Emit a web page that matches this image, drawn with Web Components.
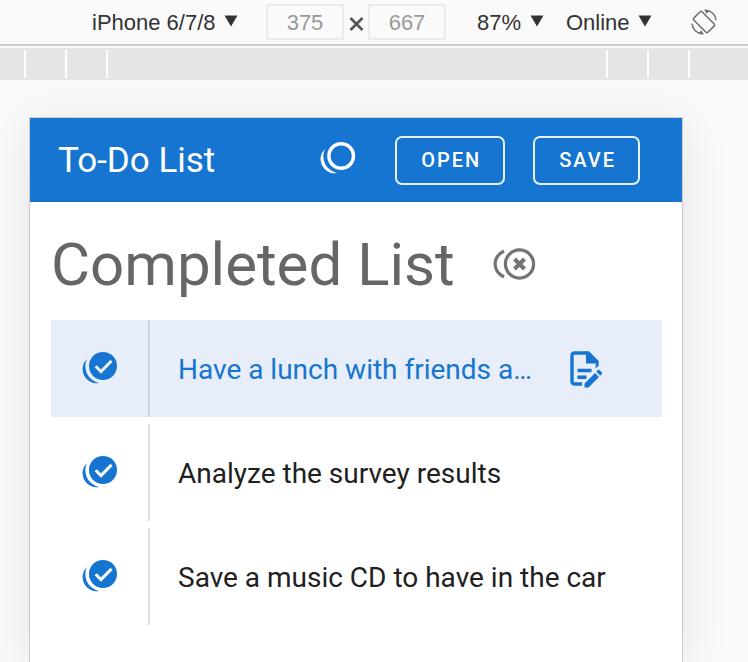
<!DOCTYPE html>
<html lang="en">
<head>
<meta charset="utf-8">
<title>To-Do List</title>
<style>
html { height: 100%; }
body { margin: 0; height: 100%; overflow: hidden; background: #fafafa; }
</style>
</head>
<body>
<todo-preview></todo-preview>

<script>
const define = (name, html, fill) => customElements.define(name, class extends HTMLElement {
  connectedCallback() {
    if (this.shadowRoot) return;
    const template = document.createElement('template');
    template.innerHTML = html;
    this.attachShadow({ mode: 'open' }).append(template.content.cloneNode(true));
    if (fill) fill(this, this.shadowRoot);
  }
});

define('tool-select', `
<style>
:host { display: flex; align-items: center; gap: 8px; }
select { appearance: none; border: 0; margin: 0; padding: 1px 0 0; background: none; color: #333; font: 22px/28px "Liberation Sans", sans-serif; }
svg { display: block; width: 14px; height: 12px; fill: #333; pointer-events: none; margin-bottom: 3px; }
</style>
<select><option></option></select>
<svg viewBox="0 0 14 12"><path d="M.5.5h13L7 11.5z"/></svg>`,
(host, root) => {
  root.querySelector('option').textContent = host.getAttribute('value');
  root.querySelector('select').setAttribute('aria-label', host.getAttribute('label'));
});

define('size-field', `
<style>
:host { display: block; }
input { display: block; box-sizing: border-box; width: 78px; height: 36px; border: 2px solid #ebebeb; padding: 1px 0 0; margin: 0; background: #fafafa; color: #999; text-align: center; font: 22px/28px "Liberation Sans", sans-serif; }
</style>
<input type="text">`,
(host, root) => {
  const input = root.querySelector('input');
  input.value = host.getAttribute('value');
  input.setAttribute('aria-label', host.getAttribute('label'));
});

define('device-toolbar', `
<style>
:host { display: flex; align-items: center; box-sizing: border-box; height: 46px; padding-left: 92px; border-bottom: 2px solid #ccc; background: #fafafa; }
.size { display: flex; align-items: center; gap: 4px; margin: 0 31px 0 28px; }
.times { display: block; width: 16px; height: 14px; margin-top: 4px; stroke: #555; stroke-width: 2.6; fill: none; }
.network { margin-left: 22px; }
button { border: 0; padding: 0; margin-left: 38px; background: none; }
button svg { display: block; width: 28px; height: 28px; }
</style>
<tool-select label="Device" value="iPhone 6/7/8"></tool-select>
<div class="size">
  <size-field label="Width" value="375"></size-field>
  <svg class="times" viewBox="0 0 16 14"><path d="M2.5 1l12 12m0-12l-12 12"/></svg>
  <size-field label="Height" value="667"></size-field>
</div>
<tool-select label="Zoom" value="87%"></tool-select>
<tool-select class="network" label="Network" value="Online"></tool-select>
<button aria-label="Rotate"><svg viewBox="0 0 28 28" fill="none" stroke="#6e6e6e" stroke-width="1.5">
  <rect x="8.2" y="4" width="11.6" height="20" rx="1.3" transform="rotate(-45 14 14)"/>
  <path d="M15.5 2.3c5.8.3 10.1 4.4 10.4 10M12.5 25.7C6.700 25.400 2.400 21.300 2.100 15.700"/>
  <path d="M14 1.500l5.500.700-2.700 3.600zM14 26.500l-5.500-.700 2.700-3.600z" fill="#6e6e6e" stroke="none"/>
</svg></button>`);

define('media-ruler', `
<style>
:host { display: flex; justify-content: space-between; box-sizing: border-box; height: 32px; margin-top: 2px; padding: 2px 58px 2px 24px; background: #e5e5e5; }
div { display: flex; gap: 39px; }
i { width: 2px; background: #fff; }
</style>
<div><i></i><i></i><i></i></div><div><i></i><i></i><i></i></div>`);

define('outline-button', `
<style>
:host { display: block; }
button { display: block; box-sizing: border-box; height: 49px; padding: 0 22px 0 24px; border: 2px solid #e8f1fb; border-radius: 7px; background: none; color: #fff; font: 500 20px/28px Roboto, sans-serif; letter-spacing: 2px; text-transform: uppercase; }
</style>
<button><slot></slot></button>`);

define('app-header', `
<style>
:host { display: flex; align-items: center; box-sizing: border-box; height: 84px; padding: 0 42px 0 28px; background: #1575d0; color: #fff; }
h1 { flex: 1; margin: 0; padding-top: 2px; font: 400 35px/44px Roboto, sans-serif; white-space: nowrap; }
.filter { border: 0; padding: 0; margin: 0 39px 4px 0; background: none; }
svg { display: block; width: 36px; height: 32px; }
outline-button + outline-button { margin-left: 28px; }
</style>
<h1>To-Do List</h1>
<button class="filter" aria-label="Show completed"><svg viewBox="0 0 36 32" fill="none">
  <circle cx="21.200" cy="14" r="12.300" stroke="#fff" stroke-width="3.400"/>
  <path d="M5 7A14 14 0 0 0 17 31A17 17 0 0 1 5 7z" fill="#fff"/>
</svg></button>
<outline-button>Open</outline-button>
<outline-button>Save</outline-button>`);

define('list-heading', `
<style>
:host { display: flex; align-items: center; gap: 37px; height: 118px; }
h2 { margin: 0; padding-top: 8px; color: #666; font: 400 60px/68px Roboto, sans-serif; white-space: nowrap; }
button { border: 0; padding: 0; margin-top: 6px; background: none; }
svg { display: block; width: 44px; height: 34px; }
</style>
<h2><slot></slot></h2>
<button aria-label="Clear completed"><svg viewBox="0 0 44 34" fill="none" stroke="#737373">
  <circle cx="27.500" cy="17" r="14.100" stroke-width="3.200"/>
  <path d="M12 4C.2 10 .2 24 12 30" stroke-width="3.200"/>
  <path d="M22.500 12l10 10m0-10l-10 10" stroke-width="4"/>
</svg></button>`);

define('todo-item', `
<style>
:host { display: flex; align-items: stretch; height: 97px; color: #212121; }
:host([selected]) { background: #e7eefa; color: #1575d0; }
.mark { display: flex; align-items: center; justify-content: center; flex: none; box-sizing: border-box; width: 99px; padding-bottom: 2px; border-right: 2px solid #dedede; }
:host([selected]) .mark { border-color: #ccd4e0; }
button { border: 0; padding: 0; background: none; color: #1575d0; }
svg { display: block; }
.check { width: 36px; height: 32px; --tick: #fff; }
:host([selected]) .check { --tick: #e7eefa; }
p { flex: 0 1 auto; align-self: center; margin: 2px 0 0 28px; font: 400 28px/36px Roboto, sans-serif; white-space: nowrap; }
.edit { display: none; align-self: center; margin-left: auto; margin-right: 59px; }
:host([selected]) .edit { display: block; }
.edit svg { width: 34px; height: 38px; }
</style>
<div class="mark"><button aria-label="Mark as not done"><svg class="check" viewBox="0 0 36 32">
  <circle cx="21" cy="14" r="14" fill="currentColor"/>
  <path d="M5 7A14 14 0 0 0 17 31A17 17 0 0 1 5 7z" fill="currentColor"/>
  <path d="M13.700 14.300l5.300 5.300L29.500 8.900" fill="none" stroke="var(--tick)" stroke-width="3"/>
</svg></button></div>
<p><slot></slot></p>
<button class="edit" aria-label="Edit"><svg viewBox="0 0 34 38">
  <path d="M13 34H5.500Q3 34 3 31.500V5.500Q3 3 5.500 3H18" fill="none" stroke="currentColor" stroke-width="3.400"/>
  <path d="M17 1.300h3L29.700 11v4.500l-3 3V13.500H17z" fill="currentColor"/>
  <path d="M8.500 20.500h14M8.500 27.300h9" stroke="currentColor" stroke-width="3.600"/>
  <path d="M15.500 33.500L26 23l4 4-10.500 10.500h-4zM27.300 21.700l1.600-1.600q.8-.8 1.600 0l2.400 2.400q.8.800 0 1.600l-1.600 1.600z" fill="currentColor"/>
</svg></button>`);

define('device-frame', `
<style>
:host { display: block; flex: 1; margin: 37px 65px 0 29px; border: 1px solid #ccc; border-bottom: 0; background: #fff; box-shadow: 0 6px 48px rgba(0, 0, 0, .09); }
main { display: block; padding: 0 20px 0 21px; }
.items { display: grid; gap: 7px; }
</style>
<app-header></app-header>
<main>
  <list-heading>Completed List</list-heading>
  <div class="items">
    <todo-item selected>Have a lunch with friends a…</todo-item>
    <todo-item>Analyze the survey results</todo-item>
    <todo-item>Save a music CD to have in the car</todo-item>
  </div>
</main>`);

define('todo-preview', `
<style>
:host { display: flex; flex-direction: column; min-height: 100%; }
</style>
<device-toolbar></device-toolbar>
<media-ruler></media-ruler>
<device-frame></device-frame>`);
</script>
</body>
</html>
